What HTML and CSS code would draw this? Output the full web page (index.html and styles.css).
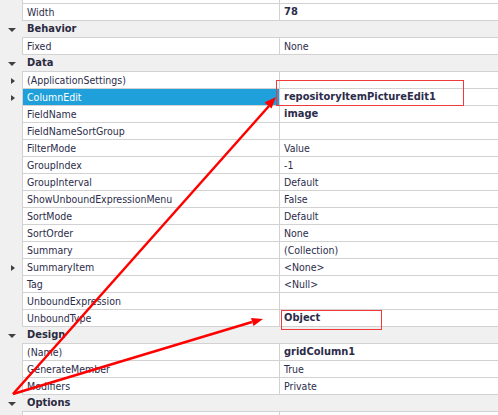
FILE: index.html
```html
<!DOCTYPE html>
<html>
<head>
<meta charset="utf-8">
<link rel="stylesheet" href="styles.css">
</head>
<body>
<div class="grid">
  <div class="row prop top"><div class="gut"></div><div class="name"></div><div class="val"></div></div>
  <div class="row prop"><div class="gut"></div><div class="name">Width</div><div class="val b">78</div></div>
  <div class="row cat"><div class="gut"><span class="tri-down"></span></div><div class="label">Behavior</div></div>
  <div class="row prop"><div class="gut"></div><div class="name">Fixed</div><div class="val">None</div></div>
  <div class="row cat"><div class="gut"><span class="tri-down"></span></div><div class="label">Data</div></div>
  <div class="row prop"><div class="gut"><span class="tri-right"></span></div><div class="name">(ApplicationSettings)</div><div class="val"></div></div>
  <div class="row prop"><div class="gut"><span class="tri-right"></span></div><div class="name sel">ColumnEdit</div><div class="val b">repositoryItemPictureEdit1</div></div>
  <div class="row prop"><div class="gut"></div><div class="name">FieldName</div><div class="val b">image</div></div>
  <div class="row prop"><div class="gut"></div><div class="name">FieldNameSortGroup</div><div class="val"></div></div>
  <div class="row prop"><div class="gut"></div><div class="name">FilterMode</div><div class="val">Value</div></div>
  <div class="row prop"><div class="gut"></div><div class="name">GroupIndex</div><div class="val">-1</div></div>
  <div class="row prop"><div class="gut"></div><div class="name">GroupInterval</div><div class="val">Default</div></div>
  <div class="row prop"><div class="gut"></div><div class="name">ShowUnboundExpressionMenu</div><div class="val">False</div></div>
  <div class="row prop"><div class="gut"></div><div class="name">SortMode</div><div class="val">Default</div></div>
  <div class="row prop"><div class="gut"></div><div class="name">SortOrder</div><div class="val">None</div></div>
  <div class="row prop"><div class="gut"></div><div class="name">Summary</div><div class="val">(Collection)</div></div>
  <div class="row prop"><div class="gut"><span class="tri-right"></span></div><div class="name">SummaryItem</div><div class="val">&lt;None&gt;</div></div>
  <div class="row prop"><div class="gut"></div><div class="name">Tag</div><div class="val">&lt;Null&gt;</div></div>
  <div class="row prop"><div class="gut"></div><div class="name">UnboundExpression</div><div class="val"></div></div>
  <div class="row prop"><div class="gut"></div><div class="name">UnboundType</div><div class="val b">Object</div></div>
  <div class="row cat"><div class="gut"><span class="tri-down"></span></div><div class="label">Design</div></div>
  <div class="row prop"><div class="gut"></div><div class="name">(Name)</div><div class="val b">gridColumn1</div></div>
  <div class="row prop"><div class="gut"></div><div class="name">GenerateMember</div><div class="val">True</div></div>
  <div class="row prop"><div class="gut"></div><div class="name">Modifiers</div><div class="val">Private</div></div>
  <div class="row cat"><div class="gut"><span class="tri-down"></span></div><div class="label">Options</div></div>
  <div class="row prop"><div class="gut"></div><div class="name"></div><div class="val"></div></div>
</div>
<svg class="overlay" width="498" height="415" viewBox="0 0 498 415">
  <rect x="276.5" y="80.5" width="187" height="25" fill="none" stroke="#f03a3a" stroke-width="1"/>
  <rect x="281.5" y="310.5" width="100" height="19" fill="none" stroke="#f03a3a" stroke-width="1"/>
  <line x1="13" y1="394" x2="269" y2="106" stroke="#f00" stroke-width="2.5"/>
  <polygon points="276,97 271.5,108.5 264.5,102.5" fill="#f00"/>
  <line x1="13" y1="394" x2="252" y2="322" stroke="#f00" stroke-width="2.5"/>
  <polygon points="263,319 253.5,326 251,318" fill="#f00"/>
</svg>
</body>
</html>
```
FILE: styles.css
```css
html, body {
  margin: 0;
  padding: 0;
  background: #ffffff;
}
body {
  width: 498px;
  height: 415px;
  overflow: hidden;
  position: relative;
  font-family: "DejaVu Sans Condensed", "Liberation Sans", sans-serif;
  font-size: 10.5px;
  color: #2c2c4a;
}
.grid {
  display: flex;
  flex-direction: column;
  background: #f0f0f0;
}
.row {
  display: flex;
  height: 17px;
  flex: none;
}
.row.top {
  height: 4px;
}
.gut {
  width: 22px;
  flex: none;
  display: flex;
  align-items: center;
  justify-content: center;
}
.name, .val, .label {
  box-sizing: border-box;
  border-bottom: 1px solid #d2d2d2;
  white-space: nowrap;
  overflow: hidden;
  line-height: 16px;
}
.name {
  width: 257px;
  flex: none;
  border-left: 1px solid #d2d2d2;
  background: #ffffff;
  padding-left: 4px;
}
.name.sel {
  background: #1fa0da;
  color: #ffffff;
}
.val {
  flex: 1;
  border-left: 1px solid #d2d2d2;
  background: #ffffff;
  padding-left: 4px;
}
.b {
  font-weight: bold;
  font-size: 11px;
}
.label {
  flex: 1;
  padding-left: 5px;
  font-weight: bold;
  font-size: 11px;
  color: #2a2a40;
}
.tri-down {
  width: 0;
  height: 0;
  border-left: 4px solid transparent;
  border-right: 4px solid transparent;
  border-top: 4px solid #404040;
  margin-left: 1px;
}
.tri-right {
  width: 0;
  height: 0;
  border-top: 3.5px solid transparent;
  border-bottom: 3.5px solid transparent;
  border-left: 4px solid #404040;
  margin-left: 3px;
}
.overlay {
  position: absolute;
  left: 0;
  top: 0;
  pointer-events: none;
}
```
